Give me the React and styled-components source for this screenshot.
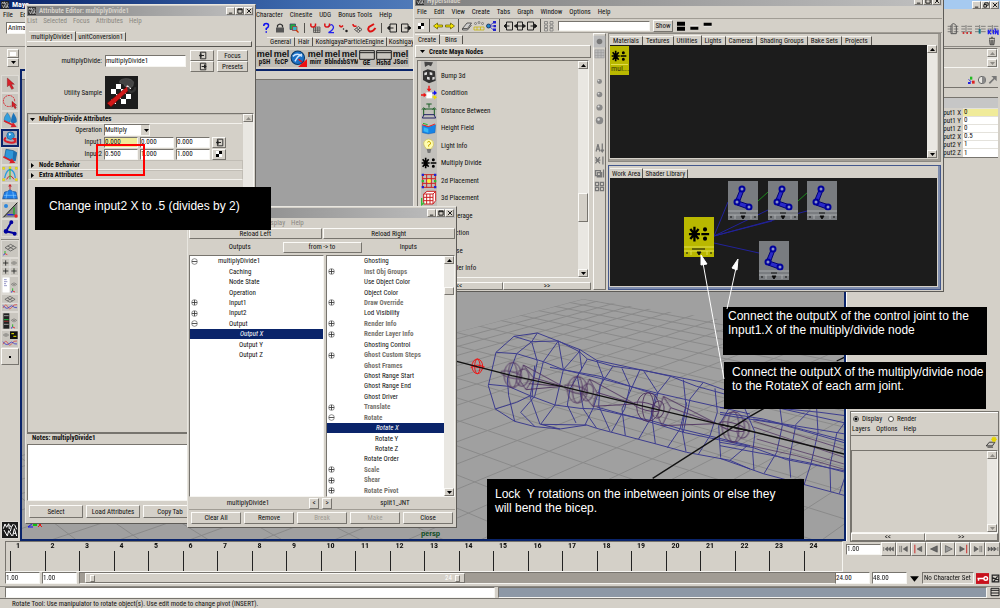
import React from "react";
import styled, { createGlobalStyle, css } from "styled-components";

const FACE = "#d4d0c8";
const NAVY = "#0a246a";
const INK = "#1c1c1c";

const raised = css`
  border: 1px solid;
  border-color: #fbfaf7 #77746e #77746e #fbfaf7;
`;
const sunken = css`
  border: 1px solid;
  border-color: #77746e #f6f5f1 #f6f5f1 #77746e;
`;

const Global = createGlobalStyle`
  * { box-sizing: border-box; }
  html, body { margin: 0; background: ${FACE}; }
  body, button, input, select, table {
    font-family: "Liberation Sans Narrow", "Roboto Condensed", "Liberation Sans", sans-serif;
    font-size: 7px;
    line-height: 8px;
    color: #111;
  }
  button, input, select { margin: 0; padding: 0; border-radius: 0; }
  h1, h2, p, ul { margin: 0; padding: 0; font-size: inherit; list-style: none; }
`;

/* ---------- shared parts ---------- */

const Desktop = styled.div`
  position: relative;
  display: flex;
  flex-direction: column;
  width: 100%;
  min-height: 100vh;
  overflow: hidden;
  background: ${FACE};
`;

const Svg = styled.svg`
  display: block;
  flex: none;
  width: ${(p) => p.$w || 16}px;
  height: ${(p) => p.$h || p.$w || 16}px;
`;

const Button = styled.button`
  ${raised}
  background: ${FACE};
  color: ${(p) => (p.disabled ? "#a19d95" : "#111")};
  height: ${(p) => p.$h || 12}px;
  flex: ${(p) => (p.$w ? "none" : 1)};
  width: ${(p) => (p.$w ? p.$w + "px" : "auto")};
  display: flex;
  align-items: center;
  justify-content: center;
  white-space: nowrap;
`;

const Field = styled.input`
  ${sunken}
  display: block;
  background: ${(p) => p.$bg || "#fff"};
  min-width: 0;
  width: ${(p) => (p.$w ? p.$w + "px" : "100%")};
  height: ${(p) => p.$h || 11}px;
  flex: ${(p) => (p.$w ? "none" : 1)};
  outline: none;
`;

const ControlBox = styled.span`
  display: flex;
  margin-left: auto;
`;

const WinButton = styled.button`
  ${raised}
  width: 9px;
  height: 8px;
  background: ${FACE};
  display: grid;
  place-items: center;
`;

const glyphs = {
  min: "M1 6h4",
  max: "M1 1h5v5h-5zM1 2h5",
  restore: "M2 3V1h4v3h-1M1 3h3v3h-3z",
  close: "M1 1l5 5M6 1l-5 5",
};

function WinControls({ middle = "max" }) {
  return (
    <ControlBox>
      {["min", middle, "close"].map((k) => (
        <WinButton key={k} aria-label={k}>
          <Svg viewBox="0 0 7 7" $w={6}>
            <path d={glyphs[k]} fill="none" stroke="#000" />
          </Svg>
        </WinButton>
      ))}
    </ControlBox>
  );
}

const Arrow = ({ d = "down", c = "#000" }) => (
  <Svg viewBox="0 0 7 7" $w={7}>
    <path
      fill={c}
      d={{ down: "M1 2h5L3.5 5z", up: "M1 5h5L3.5 2z", right: "M2 1v5l3-2.5z" }[d]}
    />
  </Svg>
);

const ScrollTrack = styled.div`
  width: 10px;
  flex: none;
  display: flex;
  flex-direction: column;
  background: #e9e7e2;
`;
const ScrollButton = styled.button`
  ${raised}
  height: 8px;
  width: 100%;
  background: ${FACE};
  display: grid;
  place-items: center;
`;
const Thumb = styled.div`
  ${raised}
  background: ${FACE};
  margin-top: ${(p) => p.$before}px;
  height: ${(p) => p.$h}px;
`;
const Fill = styled.div`
  flex: 1;
`;

function Scrollbar({ before = 0, thumb = 0, dim }) {
  const c = dim ? "#8d8a84" : "#000";
  return (
    <ScrollTrack>
      <ScrollButton aria-label="Scroll up"><Arrow d="up" c={c} /></ScrollButton>
      {thumb > 0 && <Thumb $before={before} $h={thumb} />}
      <Fill />
      <ScrollButton aria-label="Scroll down"><Arrow c={c} /></ScrollButton>
    </ScrollTrack>
  );
}

const Window = styled.section`
  position: absolute;
  left: ${(p) => p.$x}px;
  top: ${(p) => p.$y}px;
  width: ${(p) => p.$w}px;
  height: ${(p) => p.$h}px;
  display: flex;
  flex-direction: column;
  padding: 1px;
  background: ${FACE};
  border: 1px solid;
  border-color: #e8e6e0 #5d5b57 #5d5b57 #e8e6e0;
`;

const TitleBar = styled.header`
  display: flex;
  align-items: center;
  gap: 3px;
  height: 10px;
  flex: none;
  padding: 0 1px;
  color: #d4d0c8;
  font-weight: bold;
  background: linear-gradient(90deg, #7f7f7f, #c0c0c0);
`;

const MenuBar = styled.nav`
  display: flex;
  align-items: center;
  gap: ${(p) => p.$gap || 8}px;
  height: ${(p) => p.$h || 10}px;
  flex: none;
  padding-left: ${(p) => p.$pad || 0}px;
  color: ${(p) => p.$c || "#111"};
  white-space: nowrap;
`;

const TabRow = styled.div`
  display: flex;
  align-items: flex-end;
  flex: none;
  padding-left: ${(p) => p.$pad || 0}px;
  height: ${(p) => p.$h || 10}px;
`;
const Tab = styled.button`
  background: ${FACE};
  border: 0 solid #55524d;
  border-right-width: 1px;
  border-top: 1px solid #f3f1ec;
  padding: 0 ${(p) => p.$pad || 3}px;
  height: ${(p) => (p.$on ? 10 : 9)}px;
  white-space: nowrap;
`;

/* ---------- icons, drawn on a 48 unit grid ---------- */

const mayaGlyph = (
  <g fill="none" stroke="#fff" strokeWidth="3">
    <path d="M4 20L9 6l5 10 6-11 2 16M22 8l6 8 6-10M28 16l-3 12M32 42l5-22 7 22M34 34h8M6 24l10 18 4-16 10 16M38 8l6 14" />
  </g>
);
const axis = (x, y) => (
  <g strokeWidth="2.5" fill="none">
    <path stroke="#e22" d={`M${x} ${y}l7 3`} />
    <path stroke="#1b1" d={`M${x} ${y}v-8`} />
    <path stroke="#11d" d={`M${x} ${y}l-5 4`} />
  </g>
);
const eye = (x, y, s = 1) => (
  <path
    transform={`translate(${x} ${y}) scale(${s})`}
    fill="none" stroke="#444" strokeWidth="2"
    d="M-17 0L0-10 17 0 0 10zM-9-5L9 5M9-5L-9 5"
  />
);
const curve = (y) => (
  <g fill="none" strokeWidth="2">
    <path stroke="#bbb" d={`M2 ${y}h44`} />
    <path stroke="#d33" d={`M3 ${y + 3}q8-16 14-4t12 2t16-8`} />
    <path stroke="#22c" d={`M3 ${y - 5}q10 14 18 6t12-3t12 4`} />
  </g>
);

const tools = [
  ["Select", <path fill="#d8202a" stroke="#600" d="M16 6v26l6-5 7 13 6-3-7-12h9z" />],
  ["Lasso", <g><path fill="none" stroke="#d8202a" strokeWidth="2.5" strokeDasharray="6 2" d="M28 36C8 44-2 22 8 10 20-2 40 6 38 24" /><path fill="#d8202a" stroke="#600" d="M30 22v18l4-4 5 8 4-3-5-7h6z" /></g>],
  ["Move", <g><path fill="#35a0de" stroke="#146" d="M16 2q14 16 8 28-14 6-18-6 0-10 10-22z" /><path fill="#1c74ba" d="M34 2q12 16 10 28-10 8-18 0 2-16 8-28z" /><path stroke="#d8202a" strokeWidth="5" d="M6 26l28 14" /><path fill="#d8202a" d="M26 46l18-1-11-14z" /></g>],
  ["Rotate", <g><circle cx="26" cy="16" r="13" fill="#2f97d9" stroke="#0c4f86" strokeWidth="2" /><path fill="none" stroke="#d8202a" strokeWidth="7" d="M10 22q-12 10 6 16t26-2" /><path fill="#d8202a" d="M30 24h16v18z" /><path fill="#fff" d="M20 8l8 2-6 6z" /></g>],
  ["Scale", <g><path fill="#2f97d9" stroke="#0c4f86" strokeWidth="2" d="M12 4l22 4 10 6-4 24-16-2L8 26z" /><path fill="#1c6fb0" d="M34 8l10 6-4 24-8-4z" /><path stroke="#d8202a" strokeWidth="5" d="M4 26l26 14" /><path fill="#d8202a" d="M22 46l18-1-11-14z" /></g>],
  ["Universal manipulator", <g fill="none"><path stroke="#2a9be0" strokeWidth="4" d="M8 36q4-22 16-26 14 4 16 26" /><path stroke="#c33" strokeWidth="3" d="M14 40q10-20 22 0" /><path stroke="#2b2" strokeWidth="3" d="M24 6v34" /><path fill="#fe0" stroke="#aa0" d="M2 4h6v6H2zM40 4h6v6h-6zM2 38h6v6H2zM40 38h6v6h-6zM21 2h6v6h-6z" /></g>],
  ["Soft modification", <g><path fill="#1f7fe8" stroke="#124a94" strokeWidth="2" d="M8 24l10-2q6-10 12 0l12 2 4 20H2z" /><path stroke="#8cf" strokeWidth="2" d="M5 34h38M16 22l-4 22M32 22l4 22" /><path stroke="#d8202a" strokeWidth="3" d="M24 16V2M20 7l4-5 4 5" /></g>],
  ["Show manipulator", <g><path fill="#888" d="M4 46L46 4v42z" /><path stroke="#111" strokeWidth="3" d="M4 46L46 2" /><circle cx="12" cy="12" r="6" fill="#2b86dd" /><path stroke="#22d" strokeWidth="4" d="M38 38H16" /><path stroke="#2a2" strokeWidth="4" d="M36 38V16" /><circle cx="42" cy="42" r="5" fill="#e22" /></g>],
  ["Joint", <g fill="none" stroke="#00009c" strokeWidth="6"><path d="M28 6L12 34l26 6" /><circle cx="28" cy="7" r="3" /><circle cx="12" cy="34" r="4" /><circle cx="38" cy="41" r="3" /></g>],
];

const layouts = [
  ["Single view", <g>{eye(26, 20)}{axis(9, 38)}</g>],
  ["Four view", <g><path stroke="#eee" strokeWidth="2" d="M24 0v48M0 24h48" /><path stroke="#222" strokeWidth="2.5" d="M3 12h16M11 4v16M3 36h16M11 28v16M28 36h16M36 28v16" />{eye(36, 12, 0.5)}</g>],
  ["Outliner and view", <g><path fill="#fff" d="M1 1h22v46H1z" /><path stroke="#66a" strokeWidth="2" d="M6 8h8M6 14h10M6 20h6M6 26h9" />{eye(36, 22, 0.5)}{axis(32, 42)}</g>],
  ["View and graph", <g>{eye(24, 13, 0.9)}<path stroke="#eee" strokeWidth="2" d="M0 25h48" />{curve(36)}</g>],
  ["Hypershade and view", <g><path fill="#222" d="M4 1h18v46H4z" /><path stroke="#999" strokeWidth="3" d="M6 8h14M6 34h14" /><path stroke="#2b4" strokeWidth="3" d="M6 20h14" /><path stroke="#c33" strokeWidth="2" d="M6 25h14" />{eye(36, 22, 0.5)}{axis(32, 42)}</g>],
  ["View, hypergraph and graph", <g>{eye(12, 12, 0.5)}<path fill="#111" d="M24 1h23v23H24z" /><path stroke="#ee0" strokeWidth="3" d="M28 8h8M34 16h9" />{curve(37)}</g>],
];

/* ---------- top of the main window ---------- */

const AppTitle = styled(TitleBar)`
  height: 9px;
  color: #fff;
  font-size: 8px;
  background: linear-gradient(90deg, ${NAVY}, #3c68ac 30%, #a6caf0 92%);
`;
const TopRow = styled.div`
  display: grid;
  grid-template-columns: 256px 1fr auto;
  align-items: center;
  height: ${(p) => p.$h}px;
  flex: none;
  border-bottom: ${(p) => (p.$rule ? "1px solid #8b8882" : "0")};
`;
const Inline = styled.div`
  display: flex;
  align-items: center;
  gap: ${(p) => p.$gap || 0}px;
  padding-left: ${(p) => p.$pl || 0}px;
  padding-right: ${(p) => p.$pr || 0}px;
  white-space: nowrap;
`;
const Stack = styled.div`
  display: flex;
  flex-direction: column;
`;
const ModeSelect = styled.select`
  ${sunken}
  width: 60px;
  height: 12px;
  background: #fff;
  appearance: none;
  padding-left: 1px;
`;
const ShelfItem = styled.button`
  width: 17px;
  height: 17px;
  flex: none;
  border: 0;
  background: #c0bdb7;
  display: flex;
  flex-direction: column;
  align-items: center;
  overflow: hidden;
  line-height: 7px;
`;
const MelMark = styled.b`
  font: bold 9px/9px "Liberation Sans", sans-serif;
`;
const Separator = styled.i`
  width: 1px;
  height: ${(p) => p.$h || 10}px;
  margin: 0 2px;
  background: #55534e;
`;

const statusIcons = [
  <path key="q" d="M15 16q0-10 10-10t9 10q0 6-9 10v6M25 37v6" fill="none" stroke="#11e" strokeWidth="6" />,
  <g key="l"><path d="M14 22v-8q10-12 20 0v8" fill="none" stroke="#333" strokeWidth="5" /><path d="M8 22h32v20H8z" fill="#555" /></g>,
  <g key="s"><path d="M8 8h22v22H8z" fill="#2a4" stroke="#346" strokeWidth="3" /><path d="M18 18h18v16H18z" fill="#38b6c8" stroke="#a33" strokeWidth="3" /><path d="M32 32l10 10" stroke="#c30" strokeWidth="5" /></g>,
  null,
  <g key="g"><path d="M18 20h26v22H18zM18 28h26M18 35h26M26 20v22M35 20v22" fill="none" stroke="#333" strokeWidth="2.5" /><path d="M8 6q-4 14 8 14t10-14" fill="none" stroke="#d11" strokeWidth="6" /></g>,
  <g key="c"><path d="M20 20q16-20 22 0 0 12-20 22h22" fill="none" stroke="#22e" strokeWidth="5" /><path d="M8 6q-4 14 8 14t10-14" fill="none" stroke="#d11" strokeWidth="6" /></g>,
  <g key="p"><path d="M10 12q4 14 14 2" fill="none" stroke="#d11" strokeWidth="6" /><circle cx="38" cy="36" r="5" fill="#222" /><circle cx="26" cy="28" r="3" fill="#222" /></g>,
  <g key="v"><path d="M14 30l16-12 14 12-14 12zM22 24l14 12M36 24L22 36" fill="none" stroke="#333" strokeWidth="3" /><path d="M8 8q0 12 14 8" fill="none" stroke="#d11" strokeWidth="6" /></g>,
  <path key="m" d="M36 8L16 20q-8 12 4 18 10 2 22-14" fill="none" stroke="#d11" strokeWidth="8" />,
  null,
  <g key="i"><path d="M16 8h26v32H16z" fill="none" stroke="#222" strokeWidth="4" /><path d="M30 24H8M14 16l-8 8 8 8z" stroke="#222" strokeWidth="4" /></g>,
  <g key="o"><path d="M6 8h26v32H6z" fill="none" stroke="#222" strokeWidth="4" /><path d="M18 24h20M34 16l10 8-10 8z" stroke="#222" strokeWidth="4" /></g>,
];

const lineMark = (x, tail) => (
  <g key={x} transform={`translate(${x} 0)`} fill="none" stroke="#555" strokeWidth="2">
    <path d="M0 16h12M0 24h12M0 32h12M18 16h14M18 24h14M18 32h14M14 12v24" />
    {tail}
  </g>
);

const shelf = ["pSH", "fcCP", null, "mirr", "Bblnd", "abSYM", "GE", "Hshd", "JSori"];

const SmallScroll = styled.div`
  ${sunken}
  display: flex;
  justify-content: flex-end;
  width: 56px;
  height: 20px;
`;

function TopArea() {
  return (
    <>
      <AppTitle>
        <Svg viewBox="0 0 48 48" $w={8}><path fill="#222" d="M0 0h48v48H0z" />{mayaGlyph}</Svg>
        Maya
        <WinControls middle="restore" />
      </AppTitle>
      <TopRow $h={11}>
        <Inline $gap={7} $pl={3}><span>File</span><span>Edit</span></Inline>
        <Inline $gap={7}>
          <span>Character</span><span>Cinesite</span><span>UDG</span><span>Bonus Tools</span><span>Help</span>
        </Inline>
      </TopRow>
      <TopRow $h={15}>
        <Inline $pl={6}>
          <ModeSelect aria-label="Menu set" defaultValue="a"><option value="a">Animation</option></ModeSelect>
        </Inline>
        <Inline $gap={2} $pl={4}>
          {statusIcons.map((n, i) =>
            n ? <Svg key={i} viewBox="0 0 48 48" $w={12}>{n}</Svg> : <Separator key={i} />
          )}
        </Inline>
        <Inline $pr={1}>
          <Svg viewBox="0 0 156 42" $w={52} $h={14}>
            {lineMark(2, <path d="M10 38V14q6-12 16 0v24M10 38h16" strokeWidth="3" />)}
            {lineMark(43, <path stroke="#c33" d="M4 36h5M15 36h5M26 36h5" strokeWidth="6" />)}
            {lineMark(84, <path stroke="#178" d="M14 24v14" strokeWidth="6" />)}
            {lineMark(122, <path stroke="#22e" strokeWidth="4" d="M2 26v14M11 26l-8 7 8 7M17 26v14M23 40V26l8 14V26" />)}
          </Svg>
        </Inline>
      </TopRow>
      <TopRow $h={12} $rule>
        <span />
        <TabRow $h={11} $pad={11}>
          <Tab>General</Tab><Tab>Hair</Tab>
          <Tab $pad={2}>KoshigayaParticleEngine</Tab>
          <Tab $pad={2}>Koshigaya</Tab>
        </TabRow>
        <Inline $pr={4}>
          <Svg viewBox="0 0 30 36" $w={8} $h={10}>
            <path d="M4 8h22M12 4h6M6 12l2 20h14l2-20M12 14v16M18 14v16" fill="none" stroke="#222" strokeWidth="3" />
          </Svg>
        </Inline>
      </TopRow>
      <TopRow $h={22}>
        <Inline $pl={7}>
          <Stack>
            <Button $w={12} $h={9} aria-label="Shelf tabs"><Svg viewBox="0 0 6 4" $w={6} $h={4}><path fill="#fff" d="M0 0h6v4H0z" /></Svg></Button>
            <Button $w={12} $h={9} aria-label="Shelf menu"><Arrow /></Button>
          </Stack>
        </Inline>
        <Inline>
          {shelf.map((s, i) =>
            s ? (
              <ShelfItem key={s}>
                {i > 5 && i < 8 ? (
                  <Svg viewBox="0 0 48 30" $w={16} $h={10}><path d="M2 2h44v26H2zM2 8h44" fill="#c8c5bf" stroke="#222" strokeWidth="3" /></Svg>
                ) : (
                  <MelMark>mel</MelMark>
                )}
                <b>{s}</b>
              </ShelfItem>
            ) : (
              <ShelfItem key="ball" aria-label="Rotate">
                <Svg viewBox="0 0 48 48" $w={17}>
                  <circle cx="22" cy="22" r="19" fill="#1b6fc4" stroke="#0a3868" strokeWidth="3" />
                  <path d="M8 18q12-12 26 0M14 32q8-16 20-20" fill="none" stroke="#cfe6ff" strokeWidth="4" />
                  <path d="M24 26l10 8M46 30v16H28z" fill="#e11" stroke="#e11" strokeWidth="4" />
                </Svg>
              </ShelfItem>
            )
          )}
        </Inline>
        <Inline $pr={2}><SmallScroll><Scrollbar dim /></SmallScroll></Inline>
      </TopRow>
    </>
  );
}

/* ---------- main body ---------- */

const Body = styled.main`
  display: grid;
  grid-template-columns: 20px 1fr 154px;
  flex: 1;
`;
const ToolColumn = styled.aside`
  display: flex;
  flex-direction: column;
  padding: 6px 1px 2px;
  background: ${FACE};
`;
const ToolButton = styled.button`
  width: 18px;
  height: 18px;
  display: grid;
  place-items: center;
  background: ${(p) => (p.$on ? "#aeb0bb" : p.$dark ? INK : "#c9c6bf")};
  border: ${(p) => (p.$on ? `2px solid ${NAVY}` : "1px solid #dedbd5")};
`;
const LayoutGroup = styled.div`
  display: flex;
  flex-direction: column;
  margin: 2px 0 auto;
  border-top: 1px solid #8b8882;
`;
const Viewport = styled.section`
  display: flex;
  flex-direction: column;
  border: 2px solid ${NAVY};
  background: #a0a0a0;
  min-width: 0;
`;
const ViewMenu = styled.div`
  height: 9px;
  flex: none;
  background: ${FACE};
  border-bottom: 1px solid #77746e;
`;
const Scene = styled.svg`
  display: block;
  width: 100%;
  flex: 1;
  min-height: 0;
  height: 0;
`;

const gridLines = (() => {
  const out = [];
  let y = 300;
  let step = 6;
  for (let i = 0; i < 22; i += 1) {
    const right = (x) => y + ((60 - y) / (1500 - 583)) * (x - 583);
    const left = (x) => y + ((y - 100) / (583 + 500)) * (x - 583);
    out.push(`M20 ${right(20)}L583 ${y}${i ? `L900 ${right(900)}` : ""}`);
    out.push(`M583 ${y}L900 ${left(900)}${i ? `M583 ${y}L20 ${left(20)}` : ""}`);
    y += step;
    step *= 1.14;
  }
  return out.join("");
})();

function Wireframe() {
  return (
    <Scene viewBox="22 81 822 459" preserveAspectRatio="xMinYMin slice" role="img" aria-label="Arm joints in the perspective view">
      <clipPath id="floor">
        <path d="M583 300L20 448V560H900V347z" />
      </clipPath>
      <path d={gridLines} stroke="#8a8a8a" fill="none" clipPath="url(#floor)" />
      <g transform="translate(450 300) scale(.33333)" fill="none" strokeWidth="3">
        <g stroke="#2c2c8c" opacity=".85">
          <path d="M192 112L262 102 390 152 440 184 570 212 760 250 900 300M192 112L138 160 115 260 136 330 194 367 255 383 330 390 410 378 440 388 615 434 710 460 840 484 900 510" />
          <path d="M192 112L245 128 325 126 388 158 412 180 490 202 580 214 662 232 740 262 900 306" />
          <path d="M138 160L200 164 280 188 340 212 450 238 540 262 620 282 700 300 900 345" />
          <path d="M115 256L175 262 240 290 315 318 390 328 440 330 520 348 600 364 700 392 900 440" />
          <path d="M245 128L200 164 172 240 176 290 194 367M262 102L245 128 262 188 240 292 270 376M325 126L280 188 254 292 212 340 255 383M325 126L340 212 315 318 272 376 330 390" />
          <path d="M388 152L395 210 360 270 352 318 378 372M388 158L340 212M412 180L382 232 400 330 440 388M440 184L460 236 430 326 405 378" />
          <path d="M490 200L450 260 446 320 480 396M516 208L540 262 524 330 484 400M570 212L530 300 516 330 526 410M580 214L624 282 600 362 566 420M662 232L616 290 604 340 616 434" />
          <path d="M700 242L708 320 690 390 652 446M710 310L696 390 708 458M760 250L720 300 700 400M795 268L802 340 780 410 745 466M860 290L806 380 812 476M892 440L840 484" />
          <path d="M136 330L200 310 240 290M272 376L410 378M440 324L570 360 700 400 900 442M300 205L450 232 620 288M246 296L254 200" />
        </g>
        <g stroke="#4a2c5c" opacity=".85">
          {[[188, 228, 26, 38], [382, 272, 30, 40], [594, 324, 34, 43], [850, 384, 34, 46]].map(([x, y, a, b]) => (
            <g key={x}>
              <ellipse cx={x} cy={y} rx={a} ry={b} />
              <ellipse cx={x} cy={y} rx={a / 2} ry={b} />
              <ellipse cx={x - 4} cy={y} rx={a + 6} ry={b / 4} transform={`rotate(14 ${x} ${y})`} />
              <ellipse cx={x + 30} cy={y + 8} rx="18" ry="26" transform={`rotate(12 ${x + 32} ${y + 8})`} />
            </g>
          ))}
          <path d="M206 240L220 198 338 262 228 272zM220 198L250 236 228 272M250 236L338 262M338 262L236 254" />
          <path d="M398 284L418 240 555 315 428 322zM418 240L440 280 428 322M440 280L555 315" />
          <path d="M622 350L640 292 800 374 636 380zM640 292L662 326 636 380M662 326L800 374" />
        </g>
        <g stroke="#f01414">
          <ellipse cx="82" cy="202" rx="16" ry="22" />
          <ellipse cx="82" cy="202" rx="8" ry="22" />
          <path d="M60 198q22 12 44 6M62 206q20-14 40-2" />
        </g>
        <path stroke="#111" strokeWidth="4" d="M20 187L186 230 350 266 560 317 800 374 900 396" />
        <path stroke="#111" strokeWidth="4" d="M608 538L900 352 942 328M1160 186L1190 172" />
      </g>
      <g transform="translate(720 300) scale(.33333)" fill="none" strokeWidth="3">
        <g stroke="#2c2c8c" opacity=".85">
          <path d="M0 326L180 328 300 340 376 350M0 340L130 360 250 392 376 425M0 346L180 375 376 432M0 430L100 446 200 482 376 516M0 440L150 468 270 492 376 520M0 478L130 524 250 556 376 590M100 360L376 405M180 328L376 372" />
          <path d="M75 330L105 400 98 460 102 514M180 328L187 380 170 460 132 524M270 334L228 376 208 480 212 536M290 330L294 400 274 490 252 558M376 368L350 404 330 500 332 578M376 530L358 584" />
        </g>
        <g stroke="#4a2c5c" opacity=".7">
          <path d="M100 366L376 452M100 384L376 476M110 420L376 496M90 440L230 470 376 512" />
        </g>
        <path stroke="#111" strokeWidth="4" d="M0 376L90 396 376 466" />
      </g>
      <g fill="none">
        <path stroke="#11e" d="M28 524h5l-5 4h5" />
        <path stroke="#1b1" strokeWidth="2" d="M33 526h4" />
        <path stroke="#e11" d="M38 524l4 4M42 524l-4 4" />
      </g>
      <text x="421" y="537" fill="#0b4a20" fontSize="7" fontWeight="bold" fontFamily="Liberation Sans">persp</text>
    </Scene>
  );
}

/* ---------- right column ---------- */

const SideColumn = styled.aside`
  display: flex;
  flex-direction: column;
  padding: 4px 2px 0 4px;
  border-left: 1px solid #fff;
`;
const SideTools = styled.div`
  display: flex;
  justify-content: flex-end;
  height: 15px;
  align-items: center;
  border-bottom: 1px solid #77746e;
`;
const ChannelHead = styled.div`
  height: 20px;
  background: linear-gradient(${FACE} 0 9px, #77746e 9px 10px, #c6c6c6 10px);
`;
const Channels = styled.table`
  border-collapse: collapse;
  margin-left: auto;
  width: 70px;
  height: 50px;
  border-bottom: 1px solid #77746e;
  th { font-weight: normal; text-align: right; padding: 0 2px 0 0; width: 35px; white-space: nowrap; }
  td { background: #fff; padding: 0 0 0 1px; border-top: 1px solid #e4e2dc; line-height: 7px; }
  tr:first-child td { background: #f0eb9a; }
`;
const LayerEditor = styled.section`
  display: flex;
  flex-direction: column;
  margin-top: auto;
  height: 129px;
  padding-top: 2px;
  border-top: 1px solid #fff;
  outline: 1px solid #77746e;
`;
const RadioLabel = styled.label`
  display: flex;
  align-items: center;
  gap: 3px;
  input {
    appearance: none;
    width: 6px;
    height: 6px;
    border: 1px solid #55534e;
    border-radius: 50%;
    background: #fff;
  }
  input:checked { background: radial-gradient(#000 0 1px, #fff 2px); }
`;
const LayerTool = styled.div`
  display: flex;
  justify-content: flex-end;
  height: 15px;
  border-top: 1px solid #77746e;
`;
const LayerList = styled.div`
  ${sunken}
  display: flex;
  justify-content: flex-end;
  flex: 1;
`;

const channels = [["Input1 X", "0"], ["Input1 Y", "0"], ["Input1 Z", "0"], ["Input2 X", "0.5"], ["Input2 Y", "1"], ["Input2 Z", "1"]];

function RightSide() {
  return (
    <SideColumn>
      <SideTools>
        <Svg viewBox="0 0 96 36" $w={32} $h={12}>
          <path d="M6 24h8v6H6z" fill="#22d" /><path d="M12 8h7v9h-7z" fill="#2b2" /><path d="M18 20h8v9h-8z" fill="#d22" /><path d="M8 16l8 8" stroke="#22d" strokeWidth="3" />
          <circle cx="48" cy="18" r="11" fill="#e8e6e1" stroke="#666" strokeWidth="3" /><path d="M48 7a11 11 0 010 22z" fill="#888" />
          <path d="M70 28L86 12" stroke="#777" strokeWidth="5" /><path fill="#777" d="M76 6h16v16z" />
        </Svg>
      </SideTools>
      <ChannelHead />
      <Channels>
        <tbody>
          {channels.map(([k, v]) => (
            <tr key={k}><th scope="row">{k}</th><td>{v}</td></tr>
          ))}
        </tbody>
      </Channels>
      <LayerEditor>
        <Inline $gap={6} $pl={2}>
          <RadioLabel><input type="radio" name="layer" defaultChecked />Display</RadioLabel>
          <RadioLabel><input type="radio" name="layer" />Render</RadioLabel>
        </Inline>
        <MenuBar $h={12} $gap={6} $pad={1}><span>Layers</span><span>Options</span><span>Help</span></MenuBar>
        <LayerTool>
          <Svg viewBox="0 0 42 42" $w={13}>
            <path d="M4 32l10-12h18l-8 12zM8 36h18" fill="#c8c5bf" stroke="#333" strokeWidth="3" />
            <path d="M29 2v18M20 11h18M23 5l12 12M35 5L23 17" stroke="#e6d400" strokeWidth="4" />
          </Svg>
        </LayerTool>
        <LayerList><Scrollbar dim /></LayerList>
        <Inline><Button $h={8}>&lt;&lt;</Button><Button $h={8}>&gt;&gt;</Button></Inline>
      </LayerEditor>
    </SideColumn>
  );
}

/* ---------- bottom rows ---------- */

const BottomRow = styled.div`
  display: grid;
  grid-template-columns: 1fr 154px;
  flex: none;
  height: ${(p) => p.$h}px;
  padding-left: 5px;
  align-items: start;
`;
const TimeTrack = styled.ol`
  ${sunken}
  display: flex;
  margin: 0 3px 0 0;
  padding: 0 4px;
  height: 31px;
  font-weight: bold;
  font-size: 8px;
  list-style: none;
`;
const Tick = styled.li`
  flex: 1;
  padding-left: 6px;
  background: linear-gradient(#222, #222) left 9px / 1px 20px no-repeat;
`;
const RangeRow = styled.div`
  display: flex;
  gap: 2px;
`;
const RangeBar = styled.div`
  ${sunken}
  flex: 1;
  height: 12px;
  display: flex;
  background: #a19c94;
  padding-left: 5px;
`;
const RangeGrip = styled.div`
  ${raised}
  display: flex;
  align-items: center;
  justify-content: space-between;
  width: 50%;
  min-width: 100px;
  padding: 0 4px;
  background: ${FACE};
  color: #fff;
`;
const RangeEnd = styled.div`
  display: flex;
  align-items: center;
  justify-content: flex-end;
  gap: 2px;
  margin-left: -12px;
`;
const PlayControls = styled.div`
  display: flex;
  align-items: center;
  margin-top: 1px;
`;
const CommandRow = styled.div`
  display: flex;
  gap: 3px;
  height: 12px;
  padding-left: 5px;
  border-top: 1px solid #8b8882;
`;
const Output = styled.div`
  ${sunken}
  flex: 1;
  background: #8d98a6;
`;
const HelpLine = styled.footer`
  height: 10px;
  padding: 1px 0 0 12px;
  border-top: 1px solid #77746e;
`;
const CharSet = styled.span`
  ${sunken}
  width: 52px;
  height: 12px;
  padding: 1px;
  white-space: nowrap;
`;
const Knob = styled.i`
  ${raised}
  width: 5px;
  height: 7px;
`;

const play = {
  "Go to start": <path d="M6 14v14M20 14l-9 7 9 7zM30 14l-8 7 8 7zM40 14l-8 7 8 7z" />,
  "Step back frame": <path d="M10 10v22M16 10v22M36 12L22 21l14 9z" />,
  "Step back key": <g><path stroke="#c11" strokeWidth="3" d="M10 6v30" /><path d="M34 12L18 21l16 9z" /></g>,
  "Play backwards": <path d="M36 10L12 21l24 11z" />,
  "Play forwards": <path fill="#999" d="M12 9l24 12-24 12z" />,
  "Step forward key": <g><path stroke="#c11" strokeWidth="3" d="M34 6v30" /><path d="M10 12l16 9-16 9z" /></g>,
  "Step forward frame": <path d="M34 10v22M28 10v22M8 12l14 9-14 9z" />,
  "Go to end": <path d="M38 14v14M24 14l9 7-9 7zM14 14l8 7-8 7zM4 14l8 7-8 7z" />,
};

function Bottom() {
  return (
    <>
      <BottomRow $h={31}>
        <TimeTrack>
          {Array.from({ length: 24 }, (_, i) => <Tick key={i}>{i + 1}</Tick>)}
        </TimeTrack>
        <PlayControls>
          <Field aria-label="Current time" defaultValue="1.00" $w={35} />
          {Object.entries(play).map(([k, g]) => (
            <Button key={k} aria-label={k} $h={14}>
              <Svg viewBox="0 0 42 42" $w={12}><g fill="#666" stroke="#444" strokeWidth="2">{g}</g></Svg>
            </Button>
          ))}
        </PlayControls>
      </BottomRow>
      <BottomRow $h={14}>
        <RangeRow>
          <Field aria-label="Animation start" defaultValue="1.00" $w={35} $h={12} />
          <Field aria-label="Playback start" defaultValue="1.00" $w={35} $h={12} />
          <RangeBar>
            <RangeGrip><Knob /><Inline $gap={3}><span>24</span><Knob /></Inline></RangeGrip>
          </RangeBar>
        </RangeRow>
        <RangeEnd>
          <Field aria-label="Playback end" defaultValue="24.00" $w={35} $h={12} />
          <Field aria-label="Animation end" defaultValue="48.00" $w={35} $h={12} />
          <Svg viewBox="0 0 10 10" $w={11}><path d="M1 3h8L5 8z" /></Svg>
          <CharSet>No Character Set</CharSet>
          <Svg viewBox="0 0 36 30" $w={13} $h={11}><path fill="#c8101c" d="M0 0h36v30H0z" /><path stroke="#fff" strokeWidth="4" d="M4 15h18M7 15v6" /><circle cx="27" cy="15" r="5" fill="none" stroke="#fff" strokeWidth="4" /></Svg>
          <Svg viewBox="0 0 30 30" $w={9}><path d="M4 4h22v22H4zM4 12l22 8M8 26L22 8" fill="none" stroke="#222" strokeWidth="4" /></Svg>
        </RangeEnd>
      </BottomRow>
      <CommandRow>
        <Field aria-label="Command line" />
        <Output />
        <Svg viewBox="0 0 30 30" $w={10}><path d="M3 4h24v22H3zM3 10h24M3 18h24" fill="none" stroke="#222" strokeWidth="3" /></Svg>
      </CommandRow>
      <HelpLine>Rotate Tool: Use manipulator to rotate object(s). Use edit mode to change pivot (INSERT).</HelpLine>
    </>
  );
}

/* ---------- attribute editor ---------- */

const AttrHead = styled.div`
  display: grid;
  grid-template-columns: 75px 82px 24px 32px;
  column-gap: 3px;
  row-gap: 4px;
  align-items: center;
  align-content: start;
  padding: 3px 0 0;
  height: 66px;
  flex: none;
`;
const LabelText = styled.label`
  text-align: right;
  white-space: nowrap;
`;
const TabEdge = styled.div`
  height: 6px;
  flex: none;
  margin-right: 2px;
  border: 1px solid #55534e;
  border-width: 0 1px 1px 0;
  border-top: 1px solid #f6f5f1;
`;
const AttrBody = styled.div`
  ${sunken}
  display: flex;
  flex: 1;
  min-height: 0;
  border-bottom: 2px solid #77746e;
`;
const AttrForm = styled.div`
  flex: 1;
`;
const Fold = styled.h2`
  display: flex;
  align-items: center;
  gap: 3px;
  height: 10px;
  border: 1px solid #c1bdb5;
  border-bottom-color: #f3f1ec;
`;
const AttrRow = styled.div`
  display: grid;
  grid-template-columns: 74px repeat(3, 34px) 14px;
  column-gap: 2px;
  align-items: center;
  height: 12px;
`;
const OpSelect = styled.select`
  ${sunken}
  width: 46px;
  height: 12px;
  appearance: none;
  background: #fff linear-gradient(${FACE}, ${FACE}) right / 8px 100% no-repeat;
`;
const SelectWrap = styled.span`
  display: grid;
  grid-column: span 2;
  align-items: center;
  justify-content: start;
  > * { grid-area: 1 / 1; }
  svg { justify-self: end; pointer-events: none; }
`;
const NotesTitle = styled.h2`
  height: 10px;
  padding-left: 5px;
`;
const Notes = styled.textarea`
  ${sunken}
  display: block;
  height: 57px;
  resize: none;
  background: #fff;
  flex: none;
`;
const ButtonRow = styled.div`
  display: flex;
  gap: 3px;
  padding: ${(p) => p.$p || "4px 2px"};
`;

const PlugIcon = ({ out }) => (
  <Svg viewBox="0 0 30 30" $w={9}>
    <path d="M8 4h18v22H8z" fill="none" stroke="#222" strokeWidth="3" />
    <path fill="#222" d={out ? "M12 13h8V7l9 8-9 8v-6h-8z" : "M20 13h-8V7l-9 8 9 8v-6h8z"} />
  </Svg>
);

const checks = Array.from({ length: 16 }, (_, i) => i)
  .filter((i) => (i + Math.floor(i / 4)) % 2 === 0)
  .map((i) => `M${18 + (i % 4) * 15} ${24 + Math.floor(i / 4) * 15}h15v15h-15z`)
  .join("");

function AttributeEditor() {
  return (
    <Window $x={25} $y={4} $w={231} $h={520}>
      <TitleBar>
        <Svg viewBox="0 0 48 48" $w={8}><path fill="#333" d="M0 0h48v48H0z" />{mayaGlyph}</Svg>
        Attribute Editor: multiplyDivide1
        <WinControls />
      </TitleBar>
      <MenuBar $c="#8b8882" $gap={6} $h={9}>
        <span>List</span><span>Selected</span><span>Focus</span><span>Attributes</span><span>Help</span>
      </MenuBar>
      <TabRow $h={16} $pad={2}><Tab $on $pad={2}>multiplyDivide1</Tab><Tab $pad={2}>unitConversion1</Tab></TabRow>
      <TabEdge />
      <AttrHead>
        <LabelText htmlFor="node">multiplyDivide:</LabelText>
        <Field id="node" defaultValue="multiplyDivide1" $w={81} $h={12} />
        <Stack>
          <Button $w={24} $h={11} aria-label="Go to input"><PlugIcon /></Button>
          <Button $w={24} $h={11} aria-label="Go to output"><PlugIcon out /></Button>
        </Stack>
        <Stack><Button $w={31} $h={11}>Focus</Button><Button $w={31} $h={11}>Presets</Button></Stack>
        <LabelText as="span">Utility Sample</LabelText>
        <Svg viewBox="0 0 99 99" $w={33}>
          <path d="M0 0h99v99H0z" fill={INK} />
          <path d="M18 24h60v60H18z" fill="#fff" />
          <path d={checks} fill={INK} />
          <path d="M6 82L66 32l8 8L18 92z" fill="#d01818" stroke="#600" strokeWidth="2" />
          <path d="M44 20q-2-10 14-12 20-2 28 10l-2 12-8 6-8-8-8 4-4-8z" fill="#444" stroke="#777" />
          <path d="M70 34q0 14 10 14 12-4 10-14" fill="none" stroke="#333" strokeWidth="7" />
        </Svg>
      </AttrHead>
      <AttrBody>
        <AttrForm>
          <Fold><Arrow />Multiply-Divide Attributes</Fold>
          <AttrRow>
            <LabelText htmlFor="op">Operation</LabelText>
            <SelectWrap>
              <OpSelect id="op" defaultValue="m"><option value="m">Multiply</option></OpSelect>
              <Arrow />
            </SelectWrap>
          </AttrRow>
          <AttrRow>
            <LabelText htmlFor="i1">Input1</LabelText>
            <Field id="i1" defaultValue="0.000" $bg="#f0eb9a" />
            <Field aria-label="Input1 Y" defaultValue="0.000" />
            <Field aria-label="Input1 Z" defaultValue="0.000" />
            <Button $h={11} aria-label="Input1 source"><PlugIcon /></Button>
          </AttrRow>
          <AttrRow>
            <LabelText htmlFor="i2">Input2</LabelText>
            <Field id="i2" defaultValue="0.500" />
            <Field aria-label="Input2 Y" defaultValue="1.000" />
            <Field aria-label="Input2 Z" defaultValue="1.000" />
            <Button $h={11} aria-label="Map texture">
              <Svg viewBox="0 0 6 6" $w={6}><path fill="#fff" d="M0 0h6v6H0z" /><path d="M3 0h3v3H3zM0 3h3v3H0z" /></Svg>
            </Button>
          </AttrRow>
          <Fold><Arrow d="right" />Node Behavior</Fold>
          <Fold><Arrow d="right" />Extra Attributes</Fold>
        </AttrForm>
        <Scrollbar dim />
      </AttrBody>
      <NotesTitle>Notes: multiplyDivide1</NotesTitle>
      <Notes aria-label="Notes" />
      <ButtonRow>
        <Button $w={54} $h={13}>Select</Button>
        <Button $w={54} $h={13}>Load Attributes</Button>
        <Button $w={54} $h={13}>Copy Tab</Button>
      </ButtonRow>
    </Window>
  );
}

/* ---------- connection editor ---------- */

const ConnHead = styled.div`
  display: grid;
  grid-template-columns: 1fr 79px 1fr;
  align-items: center;
  text-align: center;
  height: 16px;
  flex: none;
  > button { width: 100%; }
  > :first-child { padding-left: 8px; }
`;
const Lists = styled.div`
  display: grid;
  grid-template-columns: 135px 1fr;
  gap: 2px;
  flex: 1;
  min-height: 0;
`;
const ListBox = styled.div`
  ${sunken}
  display: flex;
  background: #fff;
  min-width: 0;
`;
const Rows = styled.ul`
  flex: 1;
  display: grid;
  grid-template-rows: repeat(23, 1fr);
`;
const Row = styled.li`
  display: grid;
  grid-template-columns: ${(p) => p.$indent}px 1fr;
  align-items: center;
  padding-left: 1px;
  white-space: nowrap;
  color: ${(p) => (p.$sel ? "#fff" : p.$bold ? "#77746e" : "#111")};
  background: ${(p) => (p.$sel ? NAVY : "transparent")};
  font-style: ${(p) => (p.$sel ? "italic" : "normal")};
  font-weight: ${(p) => (p.$bold ? "bold" : "normal")};
`;
const ConnNames = styled.div`
  display: grid;
  grid-template-columns: 118px 11px 11px 1fr;
  column-gap: 2px;
  align-items: center;
  text-align: center;
  height: 13px;
  flex: none;
  border-bottom: 1px solid #a19d95;
`;

const outputs = [
  ["-", "multiplyDivide1", 27], ["", "Caching", 38], ["", "Node State", 38], ["", "Operation", 38],
  ["+", "Input1", 38], ["+", "Input2", 38], ["-", "Output", 38],
  ["", "Output X", 49, "sel"], ["", "Output Y", 48], ["", "Output Z", 48],
];
const inputs = [
  ["", "Ghosting"], ["+", "Inst Obj Groups"], ["", "Use Object Color"], ["", "Object Color"],
  ["+", "Draw Override"], ["", "Lod Visibility"], ["+", "Render Info"], ["+", "Render Layer Info"],
  ["", "Ghosting Control"], ["+", "Ghost Custom Steps"], ["", "Ghost Frames", 0, "bold"],
  ["", "Ghost Range Start"], ["", "Ghost Range End"], ["", "Ghost Driver"], ["+", "Translate"],
  ["-", "Rotate"], ["", "Rotate X", 48, "sel"], ["", "Rotate Y", 47], ["", "Rotate Z", 47],
  ["", "Rotate Order"], ["+", "Scale"], ["+", "Shear"], ["+", "Rotate Pivot"],
].map(([m, t, n, k]) => [m, t, n || 36, k || (m ? "bold" : "")]);

const Tree = ({ rows }) => (
  <Rows>
    {rows.map(([mark, text, indent, kind]) => (
      <Row key={text} $indent={indent} $sel={kind === "sel"} $bold={kind === "bold"}>
        <span>
          {mark && (
            <Svg viewBox="0 0 42 42" $w={7}>
              <path d={mark === "+" ? "M6 21h30M21 6v30" : "M6 21h30"} stroke="#333" strokeWidth="5" />
              <circle cx="21" cy="21" r="17" fill="none" stroke="#555" strokeWidth="4" />
            </Svg>
          )}
        </span>
        {text}
      </Row>
    ))}
  </Rows>
);

function ConnectionEditor() {
  return (
    <Window $x={187} $y={206} $w={270} $h={322}>
      <TitleBar><WinControls /></TitleBar>
      <MenuBar $c="#8b8882" $pad={76} $gap={6}><span>Display</span><span>Help</span></MenuBar>
      <Inline $gap={1}><Button $h={11}>Reload Left</Button><Button $h={11}>Reload Right</Button></Inline>
      <ConnHead>
        <span>Outputs</span><Button $h={11}>from -&gt; to</Button><span>Inputs</span>
      </ConnHead>
      <Lists>
        <ListBox><Tree rows={outputs} /></ListBox>
        <ListBox><Tree rows={inputs} /><Scrollbar before={23} thumb={8} /></ListBox>
      </Lists>
      <ConnNames>
        <span>multiplyDivide1</span>
        <Button $w={10} $h={11}>&lt;</Button>
        <Button $w={10} $h={11}>&gt;</Button>
        <span>split1_JNT</span>
      </ConnNames>
      <ButtonRow $p="2px">
        <Button>Clear All</Button><Button>Remove</Button><Button disabled>Break</Button>
        <Button disabled>Make</Button><Button>Close</Button>
      </ButtonRow>
    </Window>
  );
}

/* ---------- hypershade ---------- */

const HyperTools = styled.div`
  display: flex;
  align-items: center;
  gap: 3px;
  height: 15px;
  flex: none;
  border: 1px solid #a19d95;
  border-width: 1px 0;
`;
const HyperBody = styled.div`
  display: grid;
  grid-template-columns: 176px 13px 1fr;
  gap: 2px;
  flex: 1;
  min-height: 0;
`;
const CreateBar = styled.h2`
  ${raised}
  display: flex;
  align-items: center;
  gap: 3px;
  height: 13px;
  flex: none;
  margin-top: 1px;
  padding-left: 3px;
`;
const CreateList = styled.div`
  ${sunken}
  display: flex;
  flex: 1;
  min-height: 0;
  margin: 2px 2px 4px;
`;
const NodeRows = styled.ul`
  flex: 1;
  display: grid;
  grid-template-rows: 6px repeat(12, minmax(0, 1fr));
`;
const NodeRow = styled.li`
  display: flex;
  align-items: center;
  gap: 4px;
  padding-left: 3px;
  overflow: hidden;
`;
const NodeIcon = styled.span`
  background: #c2c0bb;
  height: 100%;
  display: flex;
  align-items: center;
`;
const IconColumn = styled.div`
  ${raised}
  display: flex;
  flex-direction: column;
  align-items: center;
  padding: 1px 0;
  > svg:nth-child(2) { margin-bottom: 14px; }
  > svg:nth-child(6) { margin-bottom: 14px; }
`;
const Panes = styled.div`
  display: flex;
  flex-direction: column;
  gap: 3px;
  padding-right: 1px;
`;
const Pane = styled.section`
  display: flex;
  flex-direction: column;
  flex: ${(p) => p.$grow};
  padding: 1px 1px 2px;
  border: 1px solid ${(p) => (p.$focus ? "#44588c" : "#8b8882")};
  box-shadow: inset -2px -2px 0 ${(p) => (p.$focus ? "#7f8dad" : "#a19d95")};
`;
const PaneRow = styled.div`
  display: flex;
  flex: 1;
  padding: 0 2px 1px 0;
`;
const Canvas = styled.div`
  flex: 1;
  background: ${INK};
  overflow: hidden;
`;
const Swatch = styled.div`
  width: 19px;
  height: 29px;
  margin: 1px 0 0;
  background: #b9b800;
  color: #33330a;
  white-space: nowrap;
  padding: 2px 1px 0;
`;
const SwatchName = styled.div`
  border-top: 1px solid #dfde4a;
  font-size: 8px;
`;

const mulDiv = (
  <g stroke="#000" strokeWidth="5">
    <path d="M14 8v32M2 24h24M5 13l18 22M23 13L5 35M29 24h17" />
    <circle cx="37" cy="14" r="2" /><circle cx="37" cy="34" r="2" />
  </g>
);

const utilities = [
  ["Bump 3d", <g><path d="M6 10l14-6 22 6 2 28-20 8L6 36z" fill="#333" /><path d="M10 14l8-2v8l-8 2zM26 12l8 2v8l-8-2zM18 26l8 2v8l-8-2zM34 28l7-2v8l-7 2z" fill="#ddd" /></g>],
  ["Condition", <g><path fill="#fff" d="M16 22h18v18H16z" /><path stroke="#e11" strokeWidth="4" d="M0 30h12M24 2v12" /><path fill="#e11" d="M8 23l9 7-9 7zM17 11h14l-7 9z" /><path stroke="#11e" strokeWidth="4" d="M34 24h8" /><path fill="#11e" d="M39 16l9 8-9 7z" /><path stroke="#ed0" strokeWidth="4" d="M34 36h8" /><path fill="#ed0" d="M39 30l9 7-9 7z" /></g>],
  ["Distance Between", <g fill="none" strokeWidth="3"><path stroke="#175c22" d="M16 3h16M24 3v11M8 36V18h32v18M3 20l5-6 5 6M35 20l5-6 5 6" /><path stroke="#222266" d="M4 45l5-10h30l5 10z" /></g>],
  ["Height Field", <g><path fill="#1784e6" stroke="#124a94" d="M4 16l20 4 20-6-2 24-20 4-18-4z" /><path fill="#36b8f8" d="M8 22l14 4v12L8 34z" /><path stroke="#e22" strokeWidth="3" d="M4 14l18 6 20-8" fill="none" /><path stroke="#2b2" strokeWidth="3" d="M6 10l14 4" /></g>],
  ["Light Info", <g><path fill="#fffcb0" stroke="#c9bd55" strokeWidth="2" d="M17 33Q4 20 10 10q12-14 26 0 6 12-6 23z" /><path fill="#777" d="M17 33h14l-3 12h-8z" /><path fill="none" stroke="#c8a800" strokeWidth="3" d="M19 13q5-6 9 0t-5 8v5" /></g>],
  ["Multiply Divide", mulDiv],
  ["2d Placement", <g fill="none"><path stroke="#c22" strokeWidth="3" d="M5 5h38v38H5zM5 17h38M5 31h38M17 5v38M31 5v38" /><circle cx="24" cy="24" r="6" fill="#fe3" /><path fill="#22c" d="M2 2h7v7H2zM39 2h7v7h-7zM2 39h7v7H2zM39 39h7v7h-7z" /><path fill="#3b3" d="M2 21h7v7H2zM39 21h7v7h-7z" /></g>],
  ["3d Placement", <g fill="none"><path fill="#fff" stroke="#c22" strokeWidth="3" d="M8 12l10-8h26v28l-8 10H8zM8 12h28v30M36 12l8-8M17 12v30M27 12v30M8 22h28M8 32h28" /><path stroke="#3b3" strokeWidth="4" d="M2 24v20l8-6" /></g>],
  ["+/- Average", null],
  ["Projection", null],
  ["Reverse", null],
  ["Sampler Info", null],
];

const jointNode = (x, y) => (
  <g key={`${x}-${y}`} transform={`translate(${x} ${y})`}>
    <path d="M0 0h30v39H0z" fill="#797c80" />
    <path fill="#2a2ac8" stroke="#000070" strokeWidth="1" d="M12 9h4l-5 13-4-1zM10 20l12 4-2 4-11-4z" />
    <g fill="#8890c8" stroke="#00009c" strokeWidth="2">
      <circle cx="14" cy="8" r="2.500" /><circle cx="9" cy="21" r="2.500" /><circle cx="21" cy="26" r="2.500" />
    </g>
    <path d="M0 30h30M0 34h30M7 34v4M23 34v4" stroke="#a9abad" />
    <path d="M12 32h6M2 36h2M26 36h2M13 35h4l-2 3z" stroke="#111" strokeWidth="1" />
  </g>
);

function WorkArea() {
  return (
    <Svg viewBox="610 178 327 107" $w={327} $h={107}>
      <path d="M714 236L728 202M714 236L768 210M714 236L807 211M714 236L772 221M714 243L759 253" stroke="#22229a" fill="none" />
      <path d="M758 201l10-9M798 201l10-9" stroke="#1c8a1c" />
      {jointNode(728, 181)}{jointNode(768, 181)}{jointNode(807, 181)}{jointNode(759, 241)}
      <g transform="translate(684 217)">
        <path d="M0 0h30v40H0z" fill="#b9b800" />
        <g transform="translate(4 6) scale(.46)">{mulDiv}</g>
        <path d="M0 30h30M0 34h30M7 34v4M23 34v4" stroke="#e0df4e" />
        <path d="M8 32h13M2 36h2M26 36h2M13 35h4l-2 3z" stroke="#111" />
      </g>
    </Svg>
  );
}

const hyperIcons = [
  <g key="c"><path fill="#fff" d="M12 12h24v24H12z" /><path d="M24 12h12v12H24zM12 24h12v12H12z" /></g>,
  null,
  <path key="b" d="M42 20H22v-8L6 24l16 12v-8h20z" fill="#f4e400" stroke="#665f00" strokeWidth="3" />,
  <path key="f" d="M6 20h20v-8l16 12-16 12v-8H6z" fill="#f4e400" stroke="#665f00" strokeWidth="3" />,
  null,
  <path key="e" d="M6 34L24 12h18L26 34zM6 34v6h20l16-20" fill="#ccc" stroke="#333" strokeWidth="3" />,
  <g key="r" fill="none" stroke="#666" strokeWidth="3"><circle cx="10" cy="14" r="4" /><circle cx="24" cy="10" r="4" /><circle cx="38" cy="14" r="4" /><path stroke="#c8b400" d="M4 28h40v12H4zM16 28v12M30 28v12" /></g>,
  <g key="n"><circle cx="14" cy="24" r="8" fill="#28c" stroke="#124" strokeWidth="3" /><path stroke="#22c" strokeWidth="3" d="M20 22l14-12M22 24h14M20 28l14 12" /><path fill="#22c" d="M32 4h12v10H32zM34 20h10v9H34zM32 34h12v10H32z" /></g>,
  null,
  <g key="i"><path d="M18 8h24v32H18z" fill="none" stroke="#222" strokeWidth="4" /><path d="M30 24H10M16 16l-8 8 8 8z" stroke="#222" strokeWidth="4" /></g>,
  <g key="io"><path d="M14 8h20v32H14z" fill="none" stroke="#222" strokeWidth="4" /><path d="M2 24h40M10 18l-8 6 8 6zM38 18l8 6-8 6z" stroke="#222" strokeWidth="4" /></g>,
  <g key="o"><path d="M6 8h24v32H6z" fill="none" stroke="#222" strokeWidth="4" /><path d="M18 24h20M34 16l10 8-10 8z" stroke="#222" strokeWidth="4" /></g>,
  null,
  <path key="g" d="M6 6h12v10H6zM28 6h12v10H28zM6 20h12v10H6zM28 20h12v10H28zM6 34h12v10H6zM28 34h12v10H28z" fill="none" stroke="#777" strokeWidth="3" />,
];

const sideIcons = [
  <g key="1"><path d="M2 2h38v38H2z" fill="#bbb" /><circle cx="21" cy="21" r="9" fill="#777" /></g>,
  <path key="2" d="M6 6h30v26H6zM6 15h30M6 24h30M16 6v26M26 6v26" fill="#bbb" stroke="#999" strokeWidth="2" />,
  ...[8, 9, 10, 12].map((r) => (
    <g key={`r${r}`}><circle cx="21" cy="21" r={r} fill="#888" /><circle cx="18" cy="18" r={r / 3} fill="#ddd" /></g>
  )),
  ...["M10 34l6-24 6 24M12 26h8M30 8v26M25 28l5 7 5-7", "M8 10l14 20M22 10L8 30M8 20h16M32 8v26", "M8 12h16v16H8zM14 18h14v14H14zM34 8v26", "M8 8h10v10H8zM24 8h10v10H24zM8 24h10v10H8zM24 24h10v10H24z"].map((d) => (
    <path key={d} d={d} fill="none" stroke="#777" strokeWidth="4" />
  )),
];

function Hypershade() {
  return (
    <Window $x={413} $y={-6} $w={531} $h={298}>
      <TitleBar>
        <Svg viewBox="0 0 48 48" $w={8}><path fill="#333" d="M0 0h48v48H0z" />{mayaGlyph}</Svg>
        Hypershade
        <WinControls />
      </TitleBar>
      <MenuBar $h={12} $gap={7} $pad={2}>
        {["File", "Edit", "View", "Create", "Tabs", "Graph", "Window", "Options", "Help"].map((t) => <span key={t}>{t}</span>)}
      </MenuBar>
      <HyperTools>
        <Inline>
          {hyperIcons.map((n, i) =>
            n ? <Svg key={i} viewBox="0 0 48 48" $w={12}>{n}</Svg> : <Separator key={i} $h={13} />
          )}
        </Inline>
        <Field aria-label="Filter" $w={92} $h={10} />
        <Button $w={20}>Show</Button>
        <Svg viewBox="0 0 120 36" $w={40} $h={12}>
          <path d="M3 5h24v12H3zM3 20h24v12H3zM43 20h24v9H43zM83 8h24v9H83z" /><path d="M43 17h24M83 20h24" stroke="#eee" strokeWidth="2" />
        </Svg>
      </HyperTools>
      <HyperBody>
        <Stack>
          <TabRow $h={11}><Tab $on>Create</Tab><Tab $pad={5}>Bins</Tab></TabRow>
          <CreateBar><Arrow />Create Maya Nodes</CreateBar>
          <CreateList>
            <NodeRows>
              <NodeRow><NodeIcon><Svg viewBox="0 0 48 18" $w={16} $h={6}><path d="M10 2l26 2-6 12-8-4-10 6z" fill="#444" /></Svg></NodeIcon></NodeRow>
              {utilities.map(([name, icon]) => (
                <NodeRow key={name}>
                  <NodeIcon><Svg viewBox="0 0 48 48" $w={16}>{icon}</Svg></NodeIcon>
                  {name}
                </NodeRow>
              ))}
            </NodeRows>
            <Scrollbar before={124} thumb={29} />
          </CreateList>
          <Inline><Button $h={8}>&lt;&lt;</Button><Button $h={8}>&gt;&gt;</Button></Inline>
        </Stack>
        <IconColumn>
          {sideIcons.map((n, i) => <Svg key={i} viewBox="0 0 42 42" $w={13}>{n}</Svg>)}
        </IconColumn>
        <Panes>
          <Pane $grow={128}>
            <TabRow>
              {["Materials", "Textures", "Utilities", "Lights", "Cameras", "Shading Groups", "Bake Sets", "Projects"].map((t) => (
                <Tab key={t} $on={t === "Utilities"}>{t}</Tab>
              ))}
            </TabRow>
            <PaneRow>
              <Canvas>
                <Swatch>
                  <Svg viewBox="0 0 48 48" $w={16}>{mulDiv}</Svg>
                  <SwatchName>mul...</SwatchName>
                </Swatch>
              </Canvas>
              <Scrollbar />
            </PaneRow>
          </Pane>
          <Pane $grow={123} $focus>
            <TabRow $h={11}><Tab $on $pad={2}>Work Area</Tab><Tab $pad={2}>Shader Library</Tab></TabRow>
            <PaneRow><Canvas><WorkArea /></Canvas></PaneRow>
          </Pane>
        </Panes>
      </HyperBody>
    </Window>
  );
}

/* ---------- tutorial notes over the screen ---------- */

const Callout = styled.p`
  && { padding: ${(p) => p.$pad}; }
  position: absolute;
  left: ${(p) => p.$x}px;
  top: ${(p) => p.$y}px;
  width: ${(p) => p.$w}px;
  height: ${(p) => p.$h}px;
  background: #000;
  color: #fff;
  font-family: "Liberation Sans", Arial, sans-serif;
  font-size: 12px;
  line-height: 14px;
  white-space: pre;
`;
const Marker = styled.div`
  position: absolute;
  left: 96px;
  top: 144px;
  width: 49px;
  height: 32px;
  border: 2px solid #f00;
`;
const Pointers = styled.svg`
  position: absolute;
  left: 690px;
  top: 240px;
  width: 60px;
  height: 150px;
  pointer-events: none;
`;

export default function App() {
  return (
    <Desktop>
      <Global />
      <TopArea />
      <Body>
        <ToolColumn>
          {tools.map(([name, g]) => (
            <ToolButton key={name} aria-label={name} $on={name === "Rotate"}>
              <Svg viewBox="0 0 48 48" $w={name === "Rotate" ? 14 : 16}>{g}</Svg>
            </ToolButton>
          ))}
          <LayoutGroup>
            {layouts.map(([name, g]) => (
              <ToolButton key={name} aria-label={name}>
                <Svg viewBox="0 0 48 48" $w={16}>{g}</Svg>
              </ToolButton>
            ))}
            <Button $w={18} $h={17} aria-label="Panel menu"><Svg viewBox="0 0 4 4" $w={4}><path d="M1 1h2v2H1z" /></Svg></Button>
          </LayoutGroup>
          <ToolButton $dark aria-label="Maya"><Svg viewBox="0 0 48 48" $w={16}>{mayaGlyph}</Svg></ToolButton>
        </ToolColumn>
        <Viewport><ViewMenu /><Wireframe /></Viewport>
        <RightSide />
      </Body>
      <Bottom />
      <Hypershade />
      <AttributeEditor />
      <ConnectionEditor />
      <Marker />
      <Callout $x={35} $y={187} $w={236} $h={43} $pad="12px 14px">Change input2 X to .5 (divides by 2)</Callout>
      <Callout $x={723} $y={307} $w={264} $h={48} $pad="2px 5px">{"Connect the outputX of the control joint to the\nInput1.X of the multiply/divide node"}</Callout>
      <Callout $x={724} $y={362} $w={262} $h={47} $pad="3px 8px">{"Connect the outputX of the multiply/divide node\nto the RotateX of each arm joint."}</Callout>
      <Callout $x={487} $y={479} $w={317} $h={60} $pad="8px 8px">{"Lock  Y rotations on the inbetween joints or else they\nwill bend the bicep."}</Callout>
      <Pointers viewBox="690 240 60 150">
        <path d="M703 263L724 379M736 268L727 309" stroke="#fff" strokeWidth="1" />
        <path d="M701 255l6 9-6 1zM738 259l-1 11-5-2z" fill="#fff" stroke="#fff" />
      </Pointers>
    </Desktop>
  );
}
